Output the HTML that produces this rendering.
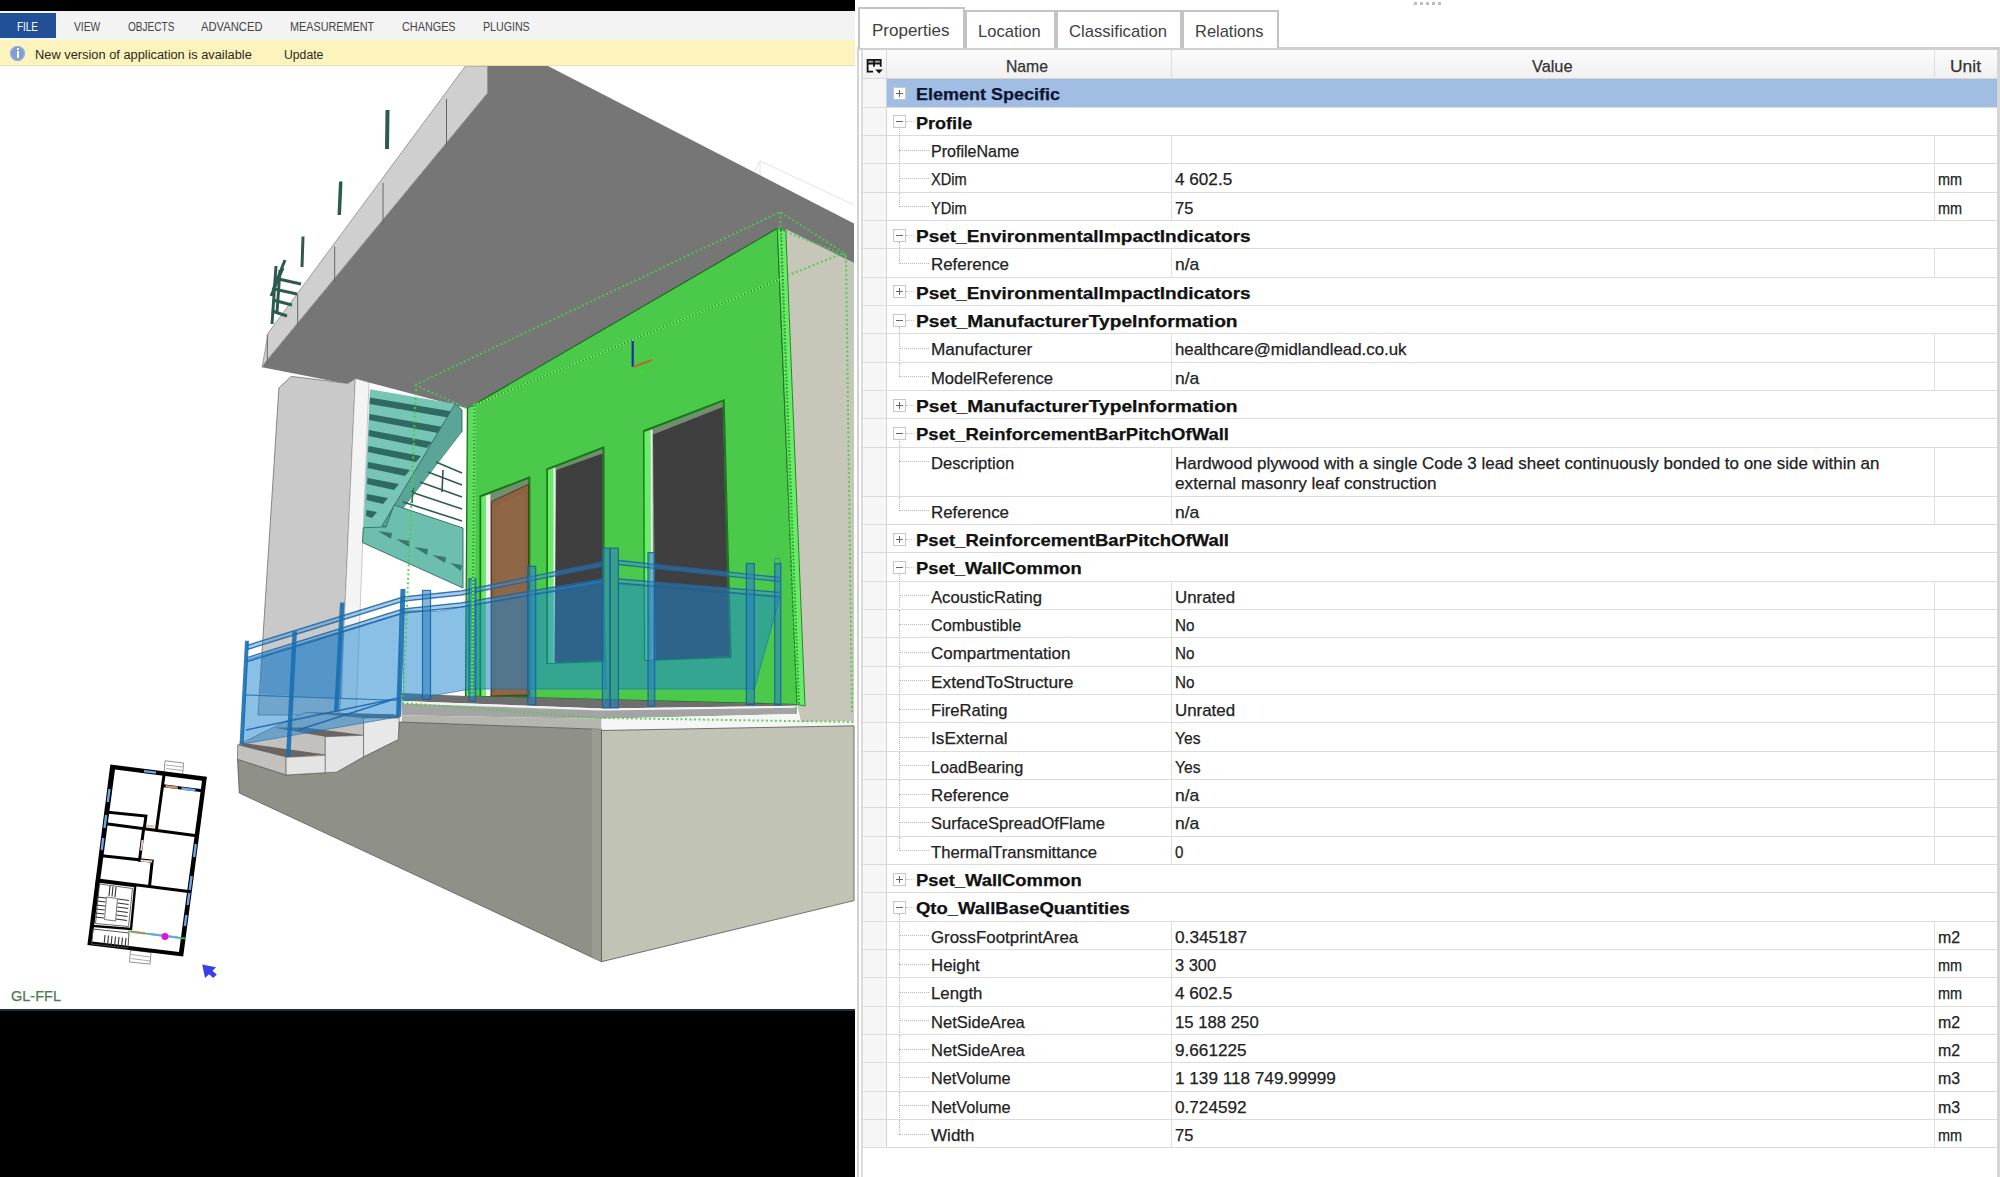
<!DOCTYPE html>
<html><head><meta charset="utf-8"><style>
html,body{margin:0;padding:0;}
body{width:2000px;height:1177px;overflow:hidden;position:relative;background:#fff;font-family:"Liberation Sans",sans-serif;}
.t{position:absolute;white-space:pre;line-height:1;transform-origin:0 0;-webkit-text-stroke:0.25px currentColor;}
.ns{-webkit-text-stroke:0;}
svg{position:absolute;left:0;top:0;}
</style></head><body>
<div style="position:absolute;left:0;top:0;width:855px;height:11px;background:#000"></div>
<div style="position:absolute;left:0;top:11px;width:855px;height:29px;background:#f3f3f3"></div>
<div style="position:absolute;left:0;top:13px;width:56px;height:25px;background:#214f98"></div>
<div style="position:absolute;left:0;top:40px;width:855px;height:26px;background:#fcf3bd;border-bottom:1px solid #e6dfb4;box-sizing:border-box"></div>
<div style="position:absolute;left:0;top:66px;width:855px;height:944px;background:#fff"></div>
<div style="position:absolute;left:0;top:1009px;width:855px;height:168px;background:#000;border-top:2px solid #1c2d48;box-sizing:border-box"></div>
<div style="position:absolute;left:10px;top:46px;width:15px;height:15px;border-radius:50%;background:#7d9fd6;box-shadow:inset 0 0 0 1px #9bb5e0"></div>
<div style="position:absolute;left:16.5px;top:48px;width:2px;height:2px;background:#fff"></div>
<div style="position:absolute;left:16.5px;top:51px;width:2px;height:7px;background:#fff"></div>
<span class="t ns" style="left:17.2px;top:21.44px;font-size:12px;font-weight:normal;color:#fff;transform:scaleX(0.8286);">FILE</span>
<span class="t ns" style="left:73.5px;top:21.44px;font-size:12px;font-weight:normal;color:#444;transform:scaleX(0.8542);">VIEW</span>
<span class="t ns" style="left:127.5px;top:21.44px;font-size:12px;font-weight:normal;color:#444;transform:scaleX(0.8402);">OBJECTS</span>
<span class="t ns" style="left:201.0px;top:21.44px;font-size:12px;font-weight:normal;color:#444;transform:scaleX(0.9347);">ADVANCED</span>
<span class="t ns" style="left:290.3px;top:21.44px;font-size:12px;font-weight:normal;color:#444;transform:scaleX(0.9010);">MEASUREMENT</span>
<span class="t ns" style="left:401.7px;top:21.44px;font-size:12px;font-weight:normal;color:#444;transform:scaleX(0.9032);">CHANGES</span>
<span class="t ns" style="left:482.8px;top:21.44px;font-size:12px;font-weight:normal;color:#444;transform:scaleX(0.8864);">PLUGINS</span>
<span class="t ns" style="left:35.2px;top:48.62px;font-size:12.5px;font-weight:normal;color:#2a2a1a;transform:scaleX(1.0263);">New version of application is available</span>
<span class="t ns" style="left:284.2px;top:48.62px;font-size:12.5px;font-weight:normal;color:#2a2a1a;transform:scaleX(0.9774);">Update</span>
<span class="t " style="left:10.7px;top:988.65px;font-size:14px;font-weight:normal;color:#4d7a52;transform:scaleX(1.0366);">GL-FFL</span>
<svg width="855" height="1009" viewBox="0 0 855 1009" style="position:absolute;left:0;top:0">
<defs>
<clipPath id="vp"><rect x="0" y="66" width="855" height="943"/></clipPath>
</defs>
<g clip-path="url(#vp)">
<!-- faint white box top right -->
<g stroke="#e2e2e2" stroke-width="1" fill="none">
<polyline points="753,175 760,161 854,205"/>
<line x1="760" y1="161" x2="760" y2="178"/>
</g>
<!-- dark slab underside -->
<polygon points="487.5,66 548,66 854,223.6 854,263 777.4,228.3 467.4,408.5 369,382.6 355.4,378.7 347.7,384 262.1,367.3 264.9,362.7 487.5,93" fill="#767676"/>
<!-- slab front strip -->
<polygon points="465.5,66 487.5,66 487.5,93 264.9,362.7 262.1,367.3 268.2,333" fill="#cfcfcf" stroke="#8a8a8a" stroke-width="0.8"/>
<line x1="446.5" y1="99" x2="446.5" y2="146.7" stroke="#666" stroke-width="1"/>
<line x1="383" y1="182.8" x2="383" y2="224.7" stroke="#666" stroke-width="1"/>
<line x1="334.7" y1="246.4" x2="334.7" y2="282.5" stroke="#666" stroke-width="1"/>
<line x1="297.7" y1="294" x2="297.7" y2="325.8" stroke="#666" stroke-width="1"/>
<line x1="267.3" y1="334.5" x2="267.3" y2="363.4" stroke="#666" stroke-width="1"/>
<!-- posts above slab -->
<polygon points="385.5,110 389.5,110 389,149 385,149" fill="#2d5a50"/>
<polygon points="339,181.5 342.5,181.5 341,215 337.5,215" fill="#2d5a50"/>
<polygon points="301.5,236.5 304.5,236.5 303.5,267 300.5,267" fill="#2d5a50"/>
<!-- railing cluster left -->
<g stroke="#2d5a50" stroke-width="3" fill="none">
<line x1="285" y1="260" x2="273" y2="290"/>
<line x1="283" y1="268" x2="271" y2="296"/>
<line x1="274" y1="278" x2="301" y2="284"/>
<line x1="274" y1="289" x2="297" y2="294"/>
<line x1="273" y1="300" x2="292" y2="305"/>
<line x1="272" y1="311" x2="287" y2="316"/>
<line x1="276" y1="266" x2="272" y2="324"/>
<line x1="280" y1="270" x2="277" y2="312"/>
</g>
<!-- column -->
<polygon points="291.2,376.4 347.7,383.3 355.4,378.7 340,715 258,715 278.9,387.9" fill="#c9c9c9" stroke="#6f6f6f" stroke-width="0.8"/>
<polygon points="355.4,378.7 369,382.6 356,715 340,715" fill="#f4f4f4" stroke="#9a9a9a" stroke-width="0.5"/>
<!-- stairs upper flight -->
<polygon points="370,389.3 456,404 462,410 462,432 386,527 363.4,527.7" fill="#76c5b5"/>
<g fill="#2f6a62">
<polygon points="370,397.5 455,412 451,418 369.5,404"/>
<polygon points="369.5,414 443,427 438,433 369,420"/>
<polygon points="369,430 432,442 427,448 368.5,436"/>
<polygon points="368.5,446 421,456 416,462 368,452"/>
<polygon points="368,462 410,470 405,476 367.5,468"/>
<polygon points="367.5,478 399,484 394,490 367,484"/>
<polygon points="367,494 388,498 383,504 366.5,500"/>
<polygon points="366.5,510 377,512 372,518 366,516"/>
</g>
<polygon points="455,404 462,410 462,432 389,527 382,526" fill="#5aa597" stroke="#2f6a62" stroke-width="0.9"/>
<!-- white area behind stair railing -->
<polygon points="462,432 463,528 394,505 389,527" fill="#ffffff"/>
<g stroke="#2f5a55" stroke-width="1.6">
<line x1="436" y1="462" x2="462" y2="473"/>
<line x1="428" y1="472" x2="462" y2="485"/>
<line x1="420" y1="482" x2="462" y2="497"/>
<line x1="411" y1="492" x2="462" y2="509"/>
<line x1="403" y1="502" x2="462" y2="521"/>
<line x1="443" y1="470" x2="442" y2="492"/>
<line x1="413" y1="488" x2="412" y2="503"/>
</g>
<!-- lower flight plate -->
<polygon points="394,505 463,528 463,588 362.5,542.6 363.4,527.7 386,527" fill="#6cbfae" stroke="#2f6a62" stroke-width="0.9"/>
<g fill="#3a786e">
<polygon points="378,531 392,533 391,539"/>
<polygon points="396,539 410,541 409,547"/>
<polygon points="414,547 428,549 427,555"/>
<polygon points="432,555 446,557 445,563"/>
<polygon points="450,563 462,565 461,571"/>
</g>
<!-- right beige side face -->
<polygon points="785.8,229 854,263 854,721 801,722 797,704.5" fill="#c6c7b9"/>
<!-- green wall -->
<polygon points="467.4,408.5 777.4,228.3 797,704.5 465.5,696" fill="#4bc94b" stroke="#1a6a1a" stroke-width="1.2"/>
<polygon points="777.4,228.3 785.8,231 805,706 797,704.5" fill="#67ec67" stroke="#1a6a1a" stroke-width="0.8"/>
<polygon points="468.5,408 476,404 475,696 467,696" fill="#5fdc5f"/>
<!-- door -->
<polygon points="480.5,496.3 529.3,477.5 529.3,696 480.5,696" fill="#6f8f6f" stroke="#167a16" stroke-width="2"/>
<polygon points="481.3,497 485.8,495.5 485.8,696 481.3,696" fill="#66ee66"/>
<polygon points="485.8,495.5 490.3,494 490.3,696 485.8,696" fill="#f2f2f2"/>
<polygon points="491.5,501.5 528.5,484.3 528.5,695 491.5,696" fill="#8b6242" stroke="#5a3a20" stroke-width="1"/>
<polygon points="495.5,507 525,492 525,693 495.5,694" fill="#8f6646"/>
<!-- window 1 -->
<polygon points="547.3,469.3 603.5,447.5 603.5,661 547.3,663" fill="#6f8f6f" stroke="#167a16" stroke-width="2"/>
<polygon points="548,470 553.3,468 553.3,663 548,663" fill="#66ee66"/>
<polygon points="553.3,468 555.5,467.5 555.5,662 553.3,663" fill="#f0f0f0"/>
<polygon points="556.3,470 602.5,453.5 602.5,660 554.5,662" fill="#3f3f3f"/>
<!-- window 2 -->
<polygon points="643.9,431 723.7,400.4 730.5,657 645,660" fill="#6f8f6f" stroke="#167a16" stroke-width="2"/>
<polygon points="644.5,432 650.5,430 651,660 645,660" fill="#66ee66"/>
<polygon points="650.5,430 652.5,429.5 653,660 651,660" fill="#f0f0f0"/>
<polygon points="653,434.5 722.7,407 729.5,656 655.8,660" fill="#3f3f3f"/>
<!-- floor strip -->
<polygon points="401.7,693 465.5,696 797,704.5 797,705.8 601.5,708.5 401.7,701" fill="#6e6e6e"/>
<polygon points="401.7,701 601.5,708.5 797,705.8 797,707.7 601.5,710.5 401.7,703.5" fill="#f2f2f2"/>
<polygon points="401.7,703.5 601.5,710.5 797,707.7 797,714 601.5,718.8 401.7,715.3" fill="#a4a4a4"/>
<polygon points="401.7,715.3 601.5,718.8 601.5,729.4 401.7,722" fill="#b4b6ad"/>
<polygon points="601.5,718.8 797,714 801,722 854,721 854,725.8 601.5,730.5" fill="#f6f6f6"/>
<!-- base -->
<polygon points="237.5,759.2 286.1,775 325.3,772.7 336.5,772.2 363.6,756.8 398.2,739.5 399.2,722 601.5,729.4 601.5,961.7 239.3,793" fill="#8f9188" stroke="#555" stroke-width="0.8"/>
<polygon points="592,729 601.5,729.4 601.5,961.7 592,957" fill="#9a9c93"/>
<polygon points="601.5,730.5 854,725.8 854,900.6 601.5,961.7" fill="#c1c3b5" stroke="#555" stroke-width="0.8"/>
<!-- steps -->
<polygon points="237.5,745.1 273,727.4 304.8,712.4 399.2,715.2 399.2,718 363.6,718 363.6,735.3 325.3,736.7 325.3,754.5 286.1,757.3 286.1,775 237.5,759.2" fill="#c3c1be" stroke="#555" stroke-width="0.6"/>
<polygon points="237.5,745.1 245,743.3 325.3,754.5 286.1,757.3" fill="#6a6462"/>
<polygon points="273,727.4 304.8,727.4 363.6,734.9 325.3,736.7" fill="#6a6462"/>
<polygon points="304.8,712.4 393.6,714.3 399.2,718 363.6,718" fill="#6a6462"/>
<polygon points="286.1,757.3 325.3,755.4 325.3,772.7 286.1,775" fill="#e4e4e4" stroke="#555" stroke-width="0.6"/>
<polygon points="325.3,736.7 363.6,735.3 363.6,756.8 336.5,772.2 325.3,772.7" fill="#e4e4e4" stroke="#555" stroke-width="0.6"/>
<polygon points="363.6,718 399.2,718 398.2,739.5 363.6,756.8" fill="#e8e8e8" stroke="#555" stroke-width="0.6"/>
<!-- glass panels (translucent) -->
<g fill="#1f84d0" fill-opacity="0.52" stroke="#1c6aa8" stroke-width="1" stroke-opacity="0.6">
<polygon points="247,659.7 400,613.5 400,700.5 245,695"/>
<polygon points="245,695 400,700.5 398.6,716.8 243,744"/>
<polygon points="403.3,610.8 440,611 603,580.5 606.5,689 470.6,689 403,701"/>
<polygon points="618.4,583.9 779.8,597.5 754.3,689 618.4,689"/>
</g>
<polygon points="262,655 344,630 342,698 260,694" fill="#1a70c0" fill-opacity="0.3"/>
<!-- rails (double bands) -->
<g stroke="#1a66aa" stroke-width="1.4" fill="none" stroke-opacity="0.9">
<polyline points="247,645.5 403.3,597 461,591 603,562"/>
<polyline points="247,649.5 403.3,601 461,595 603,566"/>
<polyline points="247,657.7 403.3,609 461,603 603,579"/>
<polyline points="247,661.7 403.3,613 461,607 603,583"/>
<polyline points="618.4,560.5 779.8,577.5"/>
<polyline points="618.4,564.5 779.8,581.5"/>
<polyline points="618.4,579 779.8,592.5"/>
<polyline points="618.4,583 779.8,596.5"/>
<polyline points="246,730 400,697.8"/>
<polyline points="298,730 390,700.5"/>
</g>
<g stroke="#3a8ccc" stroke-width="2.6" fill="none" stroke-opacity="0.45">
<polyline points="247,647.5 403.3,599 461,593 603,564"/>
<polyline points="247,659.7 403.3,611 461,605 603,581"/>
<polyline points="618.4,562.5 779.8,579.5"/>
<polyline points="618.4,581 779.8,594.5"/>
</g>
<!-- posts -->
<g fill="#1a6eb0" fill-opacity="0.9">
<polygon points="245,640.7 249,640.7 243.6,744 239.6,744"/>
<polygon points="292.5,631.2 297,631.2 290.5,756 286,756"/>
<polygon points="340,602.6 344.5,602.6 338.5,711.4 334,711.4"/>
<polygon points="400.5,589 405.5,589 401,716.8 396,716.8"/>
</g>
<g fill="#2a7ec0" fill-opacity="0.55" stroke="#15609a" stroke-width="1.2" stroke-opacity="0.85">
<rect x="422.5" y="590.4" width="8" height="109"/>
<rect x="469" y="578.8" width="6.7" height="122.2"/>
<rect x="527.7" y="566.3" width="8" height="138.2"/>
<rect x="602.4" y="548.2" width="7.5" height="159.7"/>
<rect x="610.4" y="548.2" width="8" height="159.7"/>
<rect x="648" y="552.6" width="6.7" height="153.6"/>
<rect x="746.4" y="563.5" width="7.9" height="141"/>
<rect x="774.7" y="563.5" width="6.1" height="141"/>
</g>
<circle cx="777.4" cy="561" r="3" fill="none" stroke="#2a7a8a" stroke-width="1" opacity="0.6"/>
<!-- dotted bounding box lines -->
<g stroke="#4ccc4c" stroke-width="2" stroke-dasharray="2,2.5" fill="none" opacity="0.9">
<polyline points="415,385 780,212 846,254"/>
<polyline points="415,385 467.4,408.5"/>
<polyline points="416,389 403,702"/>
<polyline points="777.4,228.3 846,256"/>
<polyline points="780,212 796,712"/>
<polyline points="846,256 852,712"/>
<polyline points="402,703 601,718 854,722"/>
<polyline points="787.5,275.6 838.3,255.2 846,254"/>
</g>
<g fill="none" stroke-width="2">
<polyline points="472,406 779.7,279.4" stroke="#6ae86a"/>
<polyline points="472,406 779.7,279.4" stroke="#2a9a2a" stroke-dasharray="1.5,2"/>
<polyline points="474.5,405 472,696" stroke="#6ae86a"/>
<polyline points="474.5,405 472,696" stroke="#2a9a2a" stroke-dasharray="1.5,2"/>
<polyline points="781,230 799,704" stroke="#2a9a2a" stroke-dasharray="1.5,2"/>
</g>
<!-- axis -->
<line x1="632.7" y1="341" x2="632.7" y2="367" stroke="#1030a8" stroke-width="2.2"/>
<line x1="633" y1="367" x2="652" y2="360" stroke="#b86a2a" stroke-width="2"/>
<circle cx="642" cy="371.5" r="2.5" fill="#3cd83c"/>
</g>
<!-- floor plan minimap -->
<g>
<polygon points="165,760.8 183.6,763 182.5,775 164,773" fill="#fff" stroke="#777" stroke-width="0.8"/>
<line x1="166" y1="765" x2="182.5" y2="767" stroke="#888" stroke-width="0.7"/>
<line x1="166" y1="768.5" x2="182.5" y2="770.5" stroke="#888" stroke-width="0.7"/>
<polygon points="130.5,950 151,952.5 150.1,964.1 129.5,962" fill="#fff" stroke="#777" stroke-width="0.8"/>
<line x1="131" y1="954.5" x2="150" y2="957" stroke="#888" stroke-width="0.7"/>
<line x1="131" y1="958.5" x2="150" y2="961" stroke="#888" stroke-width="0.7"/>
<polygon points="110.3,764.6 206.9,776.8 183.2,956.5 87.4,945" fill="#000"/>
<polygon points="115,769.6 202,780.8 179,952 92,941.5" fill="#fff"/>
<g stroke="#000" stroke-width="3" stroke-linecap="square" fill="none">
<line x1="164" y1="775" x2="156.5" y2="829.4"/>
<polyline points="110,812.4 145.9,816.1 144.3,828.3"/>
<line x1="108" y1="824" x2="197" y2="835.9"/>
<line x1="143.7" y1="828.3" x2="139.5" y2="860.2"/>
<polyline points="104,855.9 152.2,861.2 149.6,885.5"/>
<line x1="99.7" y1="880.2" x2="189" y2="891.5"/>
<line x1="165" y1="786" x2="201" y2="790.5"/>
</g>
<polygon points="97,881.2 135.2,886 131,929 92.7,925.9" fill="none" stroke="#000" stroke-width="2.4"/>
<polygon points="99.5,884 132.5,888.5 128.5,926.5 95.5,923.5" fill="none" stroke="#444" stroke-width="0.8"/>
<g stroke="#333" stroke-width="1.1">
<line x1="97" y1="897" x2="106" y2="898"/><line x1="96.6" y1="901" x2="105.6" y2="902"/><line x1="96.2" y1="905" x2="105.2" y2="906"/>
<line x1="95.8" y1="909" x2="104.8" y2="910"/><line x1="95.4" y1="913" x2="104.4" y2="914"/><line x1="95" y1="917" x2="104" y2="918"/>
<line x1="118" y1="899" x2="129" y2="900.5"/><line x1="117.6" y1="903" x2="128.6" y2="904.5"/><line x1="117.2" y1="907" x2="128.2" y2="908.5"/>
<line x1="116.8" y1="911" x2="127.8" y2="912.5"/><line x1="116.4" y1="915" x2="127.4" y2="916.5"/><line x1="116" y1="919" x2="127" y2="920.5"/>
<line x1="110" y1="886" x2="109" y2="896"/><line x1="113" y1="886.5" x2="112" y2="896.5"/><line x1="116" y1="887" x2="115" y2="897"/>
<line x1="105" y1="935" x2="104" y2="945"/><line x1="108.5" y1="935.5" x2="107.5" y2="945.5"/><line x1="112" y1="936" x2="111" y2="946"/>
<line x1="115.5" y1="936.5" x2="114.5" y2="946.5"/><line x1="119" y1="937" x2="118" y2="947"/><line x1="122.5" y1="937.5" x2="121.5" y2="947.5"/><line x1="126" y1="938" x2="125" y2="948"/>
</g>
<polygon points="106.5,897 117.5,898.5 115.5,921 104.5,919.5" fill="none" stroke="#555" stroke-width="0.8"/>
<polygon points="93,929 129,933 128,948 91.5,944" fill="none" stroke="#444" stroke-width="0.9"/>
<line x1="127.8" y1="931.2" x2="186.2" y2="938.6" stroke="#30c050" stroke-width="1.6"/>
<line x1="149" y1="933.9" x2="178" y2="937.6" stroke="#6aa8e8" stroke-width="2.2"/>
<line x1="131" y1="931.6" x2="145" y2="933.4" stroke="#b09070" stroke-width="2.2"/>
<circle cx="165" cy="936.5" r="3.4" fill="#e010e0"/>
<g stroke="#6aa8e8" stroke-width="2.4">
<line x1="144" y1="771.1" x2="156" y2="772.6"/>
<line x1="109.5" y1="789" x2="107.8" y2="802"/>
<line x1="106.2" y1="815" x2="104.5" y2="828"/>
<line x1="103.2" y1="838" x2="101.7" y2="850"/>
<line x1="195.8" y1="844" x2="194.1" y2="857"/>
<line x1="191.6" y1="876" x2="189.7" y2="890"/>
<line x1="189.3" y1="893" x2="187.7" y2="905"/>
<line x1="186.4" y1="915" x2="184.9" y2="926"/>
<line x1="181.4" y1="788.5" x2="195.3" y2="790.2"/>
</g>
<line x1="165.5" y1="786.2" x2="177.7" y2="787.7" stroke="#c09878" stroke-width="2.6"/>
<line x1="146" y1="825.6" x2="154.4" y2="826.7" stroke="#e0c0b0" stroke-width="2.2"/>
<line x1="142.5" y1="840" x2="141.2" y2="850.6" stroke="#f0d0c0" stroke-width="2"/>
<line x1="140.5" y1="860.4" x2="152.2" y2="861.4" stroke="#f0d0c0" stroke-width="2"/>
</g>
<polygon points="202.2,964.5 216,967.3 212.5,970.8 216.8,974.6 213.2,978 209,974.2 205,978" fill="#3a40e8"/>
</svg>

<div style="position:absolute;left:857px;top:50px;width:2px;height:1127px;background:#d2d2d2"></div>
<div style="position:absolute;left:861px;top:50px;width:2px;height:1127px;background:#dcdcdc"></div>
<div style="position:absolute;left:1997px;top:50px;width:3px;height:1127px;background:#d6d6d6"></div>
<div style="position:absolute;left:857px;top:47px;width:1143px;height:3px;background:#cfcfcf"></div>
<div style="position:absolute;left:858px;top:6.5px;width:107px;height:41.5px;border:2px solid #c4c4c4;border-bottom:none;box-sizing:border-box;background:#fff"></div>
<div style="position:absolute;left:965px;top:10px;width:91px;height:38px;border:2px solid #c4c4c4;border-bottom:none;box-sizing:border-box;background:#fff"></div>
<div style="position:absolute;left:1056px;top:10px;width:126px;height:38px;border:2px solid #c4c4c4;border-bottom:none;box-sizing:border-box;background:#fff"></div>
<div style="position:absolute;left:1182px;top:10px;width:97px;height:38px;border:2px solid #c4c4c4;border-bottom:none;box-sizing:border-box;background:#fff"></div>
<span class="t ns" style="left:872.0px;top:22.11px;font-size:17px;font-weight:normal;color:#404040;transform:scaleX(1.0002);">Properties</span>
<span class="t ns" style="left:978.0px;top:23.11px;font-size:17px;font-weight:normal;color:#404040;transform:scaleX(0.9738);">Location</span>
<span class="t ns" style="left:1069.0px;top:23.11px;font-size:17px;font-weight:normal;color:#404040;transform:scaleX(0.9785);">Classification</span>
<span class="t ns" style="left:1195.4px;top:23.11px;font-size:17px;font-weight:normal;color:#404040;transform:scaleX(0.9679);">Relations</span>
<div style="position:absolute;left:1414px;top:2px;width:3px;height:3px;background:#bdbdbd"></div>
<div style="position:absolute;left:1420px;top:2px;width:3px;height:3px;background:#bdbdbd"></div>
<div style="position:absolute;left:1426px;top:2px;width:3px;height:3px;background:#bdbdbd"></div>
<div style="position:absolute;left:1432px;top:2px;width:3px;height:3px;background:#bdbdbd"></div>
<div style="position:absolute;left:1438px;top:2px;width:3px;height:3px;background:#bdbdbd"></div>
<div style="position:absolute;left:863px;top:50px;width:1134px;height:29px;background:linear-gradient(#fcfcfc,#f0f0f0)"></div>
<div style="position:absolute;left:886px;top:50px;width:1px;height:29px;background:#d8d8d8"></div>
<div style="position:absolute;left:1171px;top:50px;width:1px;height:29px;background:#dcdcdc"></div>
<div style="position:absolute;left:1934px;top:50px;width:1px;height:29px;background:#dcdcdc"></div>
<div style="position:absolute;left:863px;top:78px;width:1134px;height:1px;background:#d8d8d8"></div>
<svg width="30" height="30" style="position:absolute;left:860px;top:52px" viewBox="860 52 30 30"><rect x="868.5" y="60.8" width="11.5" height="2.2" fill="#9a9a9a"/><path d="M873 71.6 H867.6 V59.9 H880.7 V66.8 M867.6 63.7 H880.7 M874 59.9 V66.8" fill="none" stroke="#111" stroke-width="1.8"/><polygon points="875.3,69.4 882.8,69.4 879,73.6" fill="#111"/></svg>
<span class="t " style="left:1006.2px;top:58.01px;font-size:17px;font-weight:normal;color:#333;transform:scaleX(0.9259);">Name</span>
<span class="t " style="left:1531.8px;top:58.01px;font-size:17px;font-weight:normal;color:#333;transform:scaleX(0.9593);">Value</span>
<span class="t " style="left:1949.6px;top:58.01px;font-size:17px;font-weight:normal;color:#333;transform:scaleX(1.0253);">Unit</span>
<div style="position:absolute;left:863px;top:79.40px;width:23px;height:28.33px;background:#f6f6f6"></div>
<div style="position:absolute;left:887px;top:79.40px;width:1110px;height:28.33px;background:#a0bde3;box-shadow:inset 0 1px 0 #a9b9cf, inset 0 -1px 0 #a9b9cf"></div>
<div style="position:absolute;left:892.5px;top:87.06px;width:13px;height:13px;box-sizing:border-box;border:1px solid #c8c8c8;background:#fff"></div>
<div style="position:absolute;left:895.5px;top:93.06px;width:7px;height:1px;background:#666"></div>
<div style="position:absolute;left:898.5px;top:90.06px;width:1px;height:7px;background:#666"></div>
<div style="position:absolute;left:906px;top:93.06px;width:8px;height:0;border-top:1px dotted #c0c0c0"></div>
<span class="t " style="left:916.4px;top:86.37px;font-size:17px;font-weight:bold;color:#0c1433;transform:scaleX(1.0583);">Element Specific</span>
<div style="position:absolute;left:863px;top:106.73px;width:1134px;height:1px;background:#dcdcdc"></div>
<div style="position:absolute;left:863px;top:107.73px;width:23px;height:28.33px;background:#f6f6f6"></div>
<div style="position:absolute;left:892.5px;top:115.40px;width:13px;height:13px;box-sizing:border-box;border:1px solid #c8c8c8;background:#fff"></div>
<div style="position:absolute;left:895.5px;top:121.40px;width:7px;height:1px;background:#666"></div>
<div style="position:absolute;left:906px;top:121.40px;width:8px;height:0;border-top:1px dotted #c0c0c0"></div>
<span class="t " style="left:916.4px;top:114.70px;font-size:17px;font-weight:bold;color:#111;transform:scaleX(1.0623);">Profile</span>
<div style="position:absolute;left:863px;top:135.06px;width:1134px;height:1px;background:#dcdcdc"></div>
<div style="position:absolute;left:863px;top:136.06px;width:23px;height:28.33px;background:#f6f6f6"></div>
<div style="position:absolute;left:1171px;top:136.06px;width:1px;height:28.33px;background:#e0e0e0"></div>
<div style="position:absolute;left:1934px;top:136.06px;width:1px;height:28.33px;background:#e0e0e0"></div>
<div style="position:absolute;left:899px;top:149.72px;width:30px;height:0;border-top:1px dotted #b8b8b8"></div>
<div style="position:absolute;left:899px;top:128.90px;width:0;height:35.49px;border-left:1px dotted #b8b8b8"></div>
<span class="t " style="left:930.8px;top:143.03px;font-size:17px;font-weight:normal;color:#222;transform:scaleX(0.9439);">ProfileName</span>
<div style="position:absolute;left:863px;top:163.39px;width:1134px;height:1px;background:#dcdcdc"></div>
<div style="position:absolute;left:863px;top:164.39px;width:23px;height:28.33px;background:#f6f6f6"></div>
<div style="position:absolute;left:1171px;top:164.39px;width:1px;height:28.33px;background:#e0e0e0"></div>
<div style="position:absolute;left:1934px;top:164.39px;width:1px;height:28.33px;background:#e0e0e0"></div>
<div style="position:absolute;left:899px;top:178.05px;width:30px;height:0;border-top:1px dotted #b8b8b8"></div>
<div style="position:absolute;left:899px;top:164.39px;width:0;height:28.33px;border-left:1px dotted #b8b8b8"></div>
<span class="t " style="left:930.8px;top:171.36px;font-size:17px;font-weight:normal;color:#222;transform:scaleX(0.8614);">XDim</span>
<span class="t " style="left:1175.1px;top:171.36px;font-size:17px;font-weight:normal;color:#222;transform:scaleX(1.0082);">4 602.5</span>
<span class="t " style="left:1938.2px;top:171.36px;font-size:17px;font-weight:normal;color:#222;transform:scaleX(0.8507);">mm</span>
<div style="position:absolute;left:863px;top:191.72px;width:1134px;height:1px;background:#dcdcdc"></div>
<div style="position:absolute;left:863px;top:192.72px;width:23px;height:28.33px;background:#f6f6f6"></div>
<div style="position:absolute;left:1171px;top:192.72px;width:1px;height:28.33px;background:#e0e0e0"></div>
<div style="position:absolute;left:1934px;top:192.72px;width:1px;height:28.33px;background:#e0e0e0"></div>
<div style="position:absolute;left:899px;top:206.38px;width:30px;height:0;border-top:1px dotted #b8b8b8"></div>
<div style="position:absolute;left:899px;top:192.72px;width:0;height:14.16px;border-left:1px dotted #b8b8b8"></div>
<span class="t " style="left:930.8px;top:199.69px;font-size:17px;font-weight:normal;color:#222;transform:scaleX(0.8614);">YDim</span>
<span class="t " style="left:1175.1px;top:199.69px;font-size:17px;font-weight:normal;color:#222;transform:scaleX(0.9671);">75</span>
<span class="t " style="left:1938.2px;top:199.69px;font-size:17px;font-weight:normal;color:#222;transform:scaleX(0.8507);">mm</span>
<div style="position:absolute;left:863px;top:220.05px;width:1134px;height:1px;background:#dcdcdc"></div>
<div style="position:absolute;left:863px;top:221.05px;width:23px;height:28.33px;background:#f6f6f6"></div>
<div style="position:absolute;left:892.5px;top:228.71px;width:13px;height:13px;box-sizing:border-box;border:1px solid #c8c8c8;background:#fff"></div>
<div style="position:absolute;left:895.5px;top:234.71px;width:7px;height:1px;background:#666"></div>
<div style="position:absolute;left:906px;top:234.71px;width:8px;height:0;border-top:1px dotted #c0c0c0"></div>
<span class="t " style="left:916.4px;top:228.02px;font-size:17px;font-weight:bold;color:#111;transform:scaleX(1.1173);">Pset_EnvironmentalImpactIndicators</span>
<div style="position:absolute;left:863px;top:248.38px;width:1134px;height:1px;background:#dcdcdc"></div>
<div style="position:absolute;left:863px;top:249.38px;width:23px;height:28.33px;background:#f6f6f6"></div>
<div style="position:absolute;left:1171px;top:249.38px;width:1px;height:28.33px;background:#e0e0e0"></div>
<div style="position:absolute;left:1934px;top:249.38px;width:1px;height:28.33px;background:#e0e0e0"></div>
<div style="position:absolute;left:899px;top:263.04px;width:30px;height:0;border-top:1px dotted #b8b8b8"></div>
<div style="position:absolute;left:899px;top:242.21px;width:0;height:21.33px;border-left:1px dotted #b8b8b8"></div>
<span class="t " style="left:930.8px;top:256.35px;font-size:17px;font-weight:normal;color:#222;transform:scaleX(0.9944);">Reference</span>
<span class="t " style="left:1175.1px;top:256.35px;font-size:17px;font-weight:normal;color:#222;transform:scaleX(1.0279);">n/a</span>
<div style="position:absolute;left:863px;top:276.71px;width:1134px;height:1px;background:#dcdcdc"></div>
<div style="position:absolute;left:863px;top:277.71px;width:23px;height:28.33px;background:#f6f6f6"></div>
<div style="position:absolute;left:892.5px;top:285.37px;width:13px;height:13px;box-sizing:border-box;border:1px solid #c8c8c8;background:#fff"></div>
<div style="position:absolute;left:895.5px;top:291.37px;width:7px;height:1px;background:#666"></div>
<div style="position:absolute;left:898.5px;top:288.37px;width:1px;height:7px;background:#666"></div>
<div style="position:absolute;left:906px;top:291.37px;width:8px;height:0;border-top:1px dotted #c0c0c0"></div>
<span class="t " style="left:916.4px;top:284.68px;font-size:17px;font-weight:bold;color:#111;transform:scaleX(1.1173);">Pset_EnvironmentalImpactIndicators</span>
<div style="position:absolute;left:863px;top:305.04px;width:1134px;height:1px;background:#dcdcdc"></div>
<div style="position:absolute;left:863px;top:306.04px;width:23px;height:28.33px;background:#f6f6f6"></div>
<div style="position:absolute;left:892.5px;top:313.70px;width:13px;height:13px;box-sizing:border-box;border:1px solid #c8c8c8;background:#fff"></div>
<div style="position:absolute;left:895.5px;top:319.70px;width:7px;height:1px;background:#666"></div>
<div style="position:absolute;left:906px;top:319.70px;width:8px;height:0;border-top:1px dotted #c0c0c0"></div>
<span class="t " style="left:916.4px;top:313.01px;font-size:17px;font-weight:bold;color:#111;transform:scaleX(1.1285);">Pset_ManufacturerTypeInformation</span>
<div style="position:absolute;left:863px;top:333.37px;width:1134px;height:1px;background:#dcdcdc"></div>
<div style="position:absolute;left:863px;top:334.37px;width:23px;height:28.33px;background:#f6f6f6"></div>
<div style="position:absolute;left:1171px;top:334.37px;width:1px;height:28.33px;background:#e0e0e0"></div>
<div style="position:absolute;left:1934px;top:334.37px;width:1px;height:28.33px;background:#e0e0e0"></div>
<div style="position:absolute;left:899px;top:348.03px;width:30px;height:0;border-top:1px dotted #b8b8b8"></div>
<div style="position:absolute;left:899px;top:327.20px;width:0;height:35.50px;border-left:1px dotted #b8b8b8"></div>
<span class="t " style="left:930.8px;top:341.34px;font-size:17px;font-weight:normal;color:#222;transform:scaleX(1.0103);">Manufacturer</span>
<span class="t " style="left:1175.1px;top:341.34px;font-size:17px;font-weight:normal;color:#222;transform:scaleX(0.9906);">healthcare@midlandlead.co.uk</span>
<div style="position:absolute;left:863px;top:361.70px;width:1134px;height:1px;background:#dcdcdc"></div>
<div style="position:absolute;left:863px;top:362.70px;width:23px;height:28.33px;background:#f6f6f6"></div>
<div style="position:absolute;left:1171px;top:362.70px;width:1px;height:28.33px;background:#e0e0e0"></div>
<div style="position:absolute;left:1934px;top:362.70px;width:1px;height:28.33px;background:#e0e0e0"></div>
<div style="position:absolute;left:899px;top:376.36px;width:30px;height:0;border-top:1px dotted #b8b8b8"></div>
<div style="position:absolute;left:899px;top:362.70px;width:0;height:14.17px;border-left:1px dotted #b8b8b8"></div>
<span class="t " style="left:930.8px;top:369.67px;font-size:17px;font-weight:normal;color:#222;transform:scaleX(0.9788);">ModelReference</span>
<span class="t " style="left:1175.1px;top:369.67px;font-size:17px;font-weight:normal;color:#222;transform:scaleX(1.0279);">n/a</span>
<div style="position:absolute;left:863px;top:390.03px;width:1134px;height:1px;background:#dcdcdc"></div>
<div style="position:absolute;left:863px;top:391.03px;width:23px;height:28.33px;background:#f6f6f6"></div>
<div style="position:absolute;left:892.5px;top:398.69px;width:13px;height:13px;box-sizing:border-box;border:1px solid #c8c8c8;background:#fff"></div>
<div style="position:absolute;left:895.5px;top:404.69px;width:7px;height:1px;background:#666"></div>
<div style="position:absolute;left:898.5px;top:401.69px;width:1px;height:7px;background:#666"></div>
<div style="position:absolute;left:906px;top:404.69px;width:8px;height:0;border-top:1px dotted #c0c0c0"></div>
<span class="t " style="left:916.4px;top:398.00px;font-size:17px;font-weight:bold;color:#111;transform:scaleX(1.1285);">Pset_ManufacturerTypeInformation</span>
<div style="position:absolute;left:863px;top:418.36px;width:1134px;height:1px;background:#dcdcdc"></div>
<div style="position:absolute;left:863px;top:419.36px;width:23px;height:28.33px;background:#f6f6f6"></div>
<div style="position:absolute;left:892.5px;top:427.02px;width:13px;height:13px;box-sizing:border-box;border:1px solid #c8c8c8;background:#fff"></div>
<div style="position:absolute;left:895.5px;top:433.02px;width:7px;height:1px;background:#666"></div>
<div style="position:absolute;left:906px;top:433.02px;width:8px;height:0;border-top:1px dotted #c0c0c0"></div>
<span class="t " style="left:916.4px;top:426.33px;font-size:17px;font-weight:bold;color:#111;transform:scaleX(1.0887);">Pset_ReinforcementBarPitchOfWall</span>
<div style="position:absolute;left:863px;top:446.69px;width:1134px;height:1px;background:#dcdcdc"></div>
<div style="position:absolute;left:863px;top:447.69px;width:23px;height:49.00px;background:#f6f6f6"></div>
<div style="position:absolute;left:1171px;top:447.69px;width:1px;height:49.00px;background:#e0e0e0"></div>
<div style="position:absolute;left:1934px;top:447.69px;width:1px;height:49.00px;background:#e0e0e0"></div>
<div style="position:absolute;left:899px;top:461.35px;width:30px;height:0;border-top:1px dotted #b8b8b8"></div>
<div style="position:absolute;left:899px;top:440.52px;width:0;height:56.17px;border-left:1px dotted #b8b8b8"></div>
<span class="t " style="left:930.8px;top:454.66px;font-size:17px;font-weight:normal;color:#222;transform:scaleX(0.9783);">Description</span>
<span class="t " style="left:1175.1px;top:454.66px;font-size:17px;font-weight:normal;color:#222;transform:scaleX(0.9979);">Hardwood plywood with a single Code 3 lead sheet continuously bonded to one side within an</span>
<span class="t " style="left:1175.1px;top:475.16px;font-size:17px;font-weight:normal;color:#222;transform:scaleX(1.0104);">external masonry leaf construction</span>
<div style="position:absolute;left:863px;top:495.69px;width:1134px;height:1px;background:#dcdcdc"></div>
<div style="position:absolute;left:863px;top:496.69px;width:23px;height:28.33px;background:#f6f6f6"></div>
<div style="position:absolute;left:1171px;top:496.69px;width:1px;height:28.33px;background:#e0e0e0"></div>
<div style="position:absolute;left:1934px;top:496.69px;width:1px;height:28.33px;background:#e0e0e0"></div>
<div style="position:absolute;left:899px;top:510.35px;width:30px;height:0;border-top:1px dotted #b8b8b8"></div>
<div style="position:absolute;left:899px;top:496.69px;width:0;height:14.17px;border-left:1px dotted #b8b8b8"></div>
<span class="t " style="left:930.8px;top:503.66px;font-size:17px;font-weight:normal;color:#222;transform:scaleX(0.9944);">Reference</span>
<span class="t " style="left:1175.1px;top:503.66px;font-size:17px;font-weight:normal;color:#222;transform:scaleX(1.0279);">n/a</span>
<div style="position:absolute;left:863px;top:524.02px;width:1134px;height:1px;background:#dcdcdc"></div>
<div style="position:absolute;left:863px;top:525.02px;width:23px;height:28.33px;background:#f6f6f6"></div>
<div style="position:absolute;left:892.5px;top:532.68px;width:13px;height:13px;box-sizing:border-box;border:1px solid #c8c8c8;background:#fff"></div>
<div style="position:absolute;left:895.5px;top:538.68px;width:7px;height:1px;background:#666"></div>
<div style="position:absolute;left:898.5px;top:535.68px;width:1px;height:7px;background:#666"></div>
<div style="position:absolute;left:906px;top:538.68px;width:8px;height:0;border-top:1px dotted #c0c0c0"></div>
<span class="t " style="left:916.4px;top:531.99px;font-size:17px;font-weight:bold;color:#111;transform:scaleX(1.0887);">Pset_ReinforcementBarPitchOfWall</span>
<div style="position:absolute;left:863px;top:552.35px;width:1134px;height:1px;background:#dcdcdc"></div>
<div style="position:absolute;left:863px;top:553.35px;width:23px;height:28.33px;background:#f6f6f6"></div>
<div style="position:absolute;left:892.5px;top:561.01px;width:13px;height:13px;box-sizing:border-box;border:1px solid #c8c8c8;background:#fff"></div>
<div style="position:absolute;left:895.5px;top:567.01px;width:7px;height:1px;background:#666"></div>
<div style="position:absolute;left:906px;top:567.01px;width:8px;height:0;border-top:1px dotted #c0c0c0"></div>
<span class="t " style="left:916.4px;top:560.32px;font-size:17px;font-weight:bold;color:#111;transform:scaleX(1.0806);">Pset_WallCommon</span>
<div style="position:absolute;left:863px;top:580.68px;width:1134px;height:1px;background:#dcdcdc"></div>
<div style="position:absolute;left:863px;top:581.68px;width:23px;height:28.33px;background:#f6f6f6"></div>
<div style="position:absolute;left:1171px;top:581.68px;width:1px;height:28.33px;background:#e0e0e0"></div>
<div style="position:absolute;left:1934px;top:581.68px;width:1px;height:28.33px;background:#e0e0e0"></div>
<div style="position:absolute;left:899px;top:595.34px;width:30px;height:0;border-top:1px dotted #b8b8b8"></div>
<div style="position:absolute;left:899px;top:574.51px;width:0;height:35.50px;border-left:1px dotted #b8b8b8"></div>
<span class="t " style="left:930.8px;top:588.65px;font-size:17px;font-weight:normal;color:#222;transform:scaleX(0.9798);">AcousticRating</span>
<span class="t " style="left:1175.1px;top:588.65px;font-size:17px;font-weight:normal;color:#222;transform:scaleX(0.9936);">Unrated</span>
<div style="position:absolute;left:863px;top:609.01px;width:1134px;height:1px;background:#dcdcdc"></div>
<div style="position:absolute;left:863px;top:610.01px;width:23px;height:28.33px;background:#f6f6f6"></div>
<div style="position:absolute;left:1171px;top:610.01px;width:1px;height:28.33px;background:#e0e0e0"></div>
<div style="position:absolute;left:1934px;top:610.01px;width:1px;height:28.33px;background:#e0e0e0"></div>
<div style="position:absolute;left:899px;top:623.67px;width:30px;height:0;border-top:1px dotted #b8b8b8"></div>
<div style="position:absolute;left:899px;top:610.01px;width:0;height:28.33px;border-left:1px dotted #b8b8b8"></div>
<span class="t " style="left:930.8px;top:616.98px;font-size:17px;font-weight:normal;color:#222;transform:scaleX(0.9545);">Combustible</span>
<span class="t " style="left:1175.1px;top:616.98px;font-size:17px;font-weight:normal;color:#222;transform:scaleX(0.8972);">No</span>
<div style="position:absolute;left:863px;top:637.34px;width:1134px;height:1px;background:#dcdcdc"></div>
<div style="position:absolute;left:863px;top:638.34px;width:23px;height:28.33px;background:#f6f6f6"></div>
<div style="position:absolute;left:1171px;top:638.34px;width:1px;height:28.33px;background:#e0e0e0"></div>
<div style="position:absolute;left:1934px;top:638.34px;width:1px;height:28.33px;background:#e0e0e0"></div>
<div style="position:absolute;left:899px;top:652.00px;width:30px;height:0;border-top:1px dotted #b8b8b8"></div>
<div style="position:absolute;left:899px;top:638.34px;width:0;height:28.33px;border-left:1px dotted #b8b8b8"></div>
<span class="t " style="left:930.8px;top:645.31px;font-size:17px;font-weight:normal;color:#222;transform:scaleX(0.9968);">Compartmentation</span>
<span class="t " style="left:1175.1px;top:645.31px;font-size:17px;font-weight:normal;color:#222;transform:scaleX(0.8972);">No</span>
<div style="position:absolute;left:863px;top:665.67px;width:1134px;height:1px;background:#dcdcdc"></div>
<div style="position:absolute;left:863px;top:666.67px;width:23px;height:28.33px;background:#f6f6f6"></div>
<div style="position:absolute;left:1171px;top:666.67px;width:1px;height:28.33px;background:#e0e0e0"></div>
<div style="position:absolute;left:1934px;top:666.67px;width:1px;height:28.33px;background:#e0e0e0"></div>
<div style="position:absolute;left:899px;top:680.34px;width:30px;height:0;border-top:1px dotted #b8b8b8"></div>
<div style="position:absolute;left:899px;top:666.67px;width:0;height:28.33px;border-left:1px dotted #b8b8b8"></div>
<span class="t " style="left:930.8px;top:673.64px;font-size:17px;font-weight:normal;color:#222;transform:scaleX(1.0182);">ExtendToStructure</span>
<span class="t " style="left:1175.1px;top:673.64px;font-size:17px;font-weight:normal;color:#222;transform:scaleX(0.8972);">No</span>
<div style="position:absolute;left:863px;top:694.00px;width:1134px;height:1px;background:#dcdcdc"></div>
<div style="position:absolute;left:863px;top:695.00px;width:23px;height:28.33px;background:#f6f6f6"></div>
<div style="position:absolute;left:1171px;top:695.00px;width:1px;height:28.33px;background:#e0e0e0"></div>
<div style="position:absolute;left:1934px;top:695.00px;width:1px;height:28.33px;background:#e0e0e0"></div>
<div style="position:absolute;left:899px;top:708.67px;width:30px;height:0;border-top:1px dotted #b8b8b8"></div>
<div style="position:absolute;left:899px;top:695.00px;width:0;height:28.33px;border-left:1px dotted #b8b8b8"></div>
<span class="t " style="left:930.8px;top:701.97px;font-size:17px;font-weight:normal;color:#222;transform:scaleX(0.9768);">FireRating</span>
<span class="t " style="left:1175.1px;top:701.97px;font-size:17px;font-weight:normal;color:#222;transform:scaleX(0.9936);">Unrated</span>
<div style="position:absolute;left:863px;top:722.33px;width:1134px;height:1px;background:#dcdcdc"></div>
<div style="position:absolute;left:863px;top:723.33px;width:23px;height:28.33px;background:#f6f6f6"></div>
<div style="position:absolute;left:1171px;top:723.33px;width:1px;height:28.33px;background:#e0e0e0"></div>
<div style="position:absolute;left:1934px;top:723.33px;width:1px;height:28.33px;background:#e0e0e0"></div>
<div style="position:absolute;left:899px;top:737.00px;width:30px;height:0;border-top:1px dotted #b8b8b8"></div>
<div style="position:absolute;left:899px;top:723.33px;width:0;height:28.33px;border-left:1px dotted #b8b8b8"></div>
<span class="t " style="left:930.8px;top:730.30px;font-size:17px;font-weight:normal;color:#222;transform:scaleX(1.0133);">IsExternal</span>
<span class="t " style="left:1175.1px;top:730.30px;font-size:17px;font-weight:normal;color:#222;transform:scaleX(0.9230);">Yes</span>
<div style="position:absolute;left:863px;top:750.66px;width:1134px;height:1px;background:#dcdcdc"></div>
<div style="position:absolute;left:863px;top:751.66px;width:23px;height:28.33px;background:#f6f6f6"></div>
<div style="position:absolute;left:1171px;top:751.66px;width:1px;height:28.33px;background:#e0e0e0"></div>
<div style="position:absolute;left:1934px;top:751.66px;width:1px;height:28.33px;background:#e0e0e0"></div>
<div style="position:absolute;left:899px;top:765.33px;width:30px;height:0;border-top:1px dotted #b8b8b8"></div>
<div style="position:absolute;left:899px;top:751.66px;width:0;height:28.33px;border-left:1px dotted #b8b8b8"></div>
<span class="t " style="left:930.8px;top:758.63px;font-size:17px;font-weight:normal;color:#222;transform:scaleX(0.9562);">LoadBearing</span>
<span class="t " style="left:1175.1px;top:758.63px;font-size:17px;font-weight:normal;color:#222;transform:scaleX(0.9230);">Yes</span>
<div style="position:absolute;left:863px;top:778.99px;width:1134px;height:1px;background:#dcdcdc"></div>
<div style="position:absolute;left:863px;top:779.99px;width:23px;height:28.33px;background:#f6f6f6"></div>
<div style="position:absolute;left:1171px;top:779.99px;width:1px;height:28.33px;background:#e0e0e0"></div>
<div style="position:absolute;left:1934px;top:779.99px;width:1px;height:28.33px;background:#e0e0e0"></div>
<div style="position:absolute;left:899px;top:793.66px;width:30px;height:0;border-top:1px dotted #b8b8b8"></div>
<div style="position:absolute;left:899px;top:779.99px;width:0;height:28.33px;border-left:1px dotted #b8b8b8"></div>
<span class="t " style="left:930.8px;top:786.96px;font-size:17px;font-weight:normal;color:#222;transform:scaleX(0.9944);">Reference</span>
<span class="t " style="left:1175.1px;top:786.96px;font-size:17px;font-weight:normal;color:#222;transform:scaleX(1.0279);">n/a</span>
<div style="position:absolute;left:863px;top:807.32px;width:1134px;height:1px;background:#dcdcdc"></div>
<div style="position:absolute;left:863px;top:808.32px;width:23px;height:28.33px;background:#f6f6f6"></div>
<div style="position:absolute;left:1171px;top:808.32px;width:1px;height:28.33px;background:#e0e0e0"></div>
<div style="position:absolute;left:1934px;top:808.32px;width:1px;height:28.33px;background:#e0e0e0"></div>
<div style="position:absolute;left:899px;top:821.99px;width:30px;height:0;border-top:1px dotted #b8b8b8"></div>
<div style="position:absolute;left:899px;top:808.32px;width:0;height:28.33px;border-left:1px dotted #b8b8b8"></div>
<span class="t " style="left:930.8px;top:815.29px;font-size:17px;font-weight:normal;color:#222;transform:scaleX(0.9737);">SurfaceSpreadOfFlame</span>
<span class="t " style="left:1175.1px;top:815.29px;font-size:17px;font-weight:normal;color:#222;transform:scaleX(1.0279);">n/a</span>
<div style="position:absolute;left:863px;top:835.65px;width:1134px;height:1px;background:#dcdcdc"></div>
<div style="position:absolute;left:863px;top:836.65px;width:23px;height:28.33px;background:#f6f6f6"></div>
<div style="position:absolute;left:1171px;top:836.65px;width:1px;height:28.33px;background:#e0e0e0"></div>
<div style="position:absolute;left:1934px;top:836.65px;width:1px;height:28.33px;background:#e0e0e0"></div>
<div style="position:absolute;left:899px;top:850.32px;width:30px;height:0;border-top:1px dotted #b8b8b8"></div>
<div style="position:absolute;left:899px;top:836.65px;width:0;height:14.16px;border-left:1px dotted #b8b8b8"></div>
<span class="t " style="left:930.8px;top:843.62px;font-size:17px;font-weight:normal;color:#222;transform:scaleX(0.9798);">ThermalTransmittance</span>
<span class="t " style="left:1175.1px;top:843.62px;font-size:17px;font-weight:normal;color:#222;transform:scaleX(0.8871);">0</span>
<div style="position:absolute;left:863px;top:863.98px;width:1134px;height:1px;background:#dcdcdc"></div>
<div style="position:absolute;left:863px;top:864.98px;width:23px;height:28.33px;background:#f6f6f6"></div>
<div style="position:absolute;left:892.5px;top:872.65px;width:13px;height:13px;box-sizing:border-box;border:1px solid #c8c8c8;background:#fff"></div>
<div style="position:absolute;left:895.5px;top:878.65px;width:7px;height:1px;background:#666"></div>
<div style="position:absolute;left:898.5px;top:875.65px;width:1px;height:7px;background:#666"></div>
<div style="position:absolute;left:906px;top:878.65px;width:8px;height:0;border-top:1px dotted #c0c0c0"></div>
<span class="t " style="left:916.4px;top:871.95px;font-size:17px;font-weight:bold;color:#111;transform:scaleX(1.0806);">Pset_WallCommon</span>
<div style="position:absolute;left:863px;top:892.31px;width:1134px;height:1px;background:#dcdcdc"></div>
<div style="position:absolute;left:863px;top:893.31px;width:23px;height:28.33px;background:#f6f6f6"></div>
<div style="position:absolute;left:892.5px;top:900.98px;width:13px;height:13px;box-sizing:border-box;border:1px solid #c8c8c8;background:#fff"></div>
<div style="position:absolute;left:895.5px;top:906.98px;width:7px;height:1px;background:#666"></div>
<div style="position:absolute;left:906px;top:906.98px;width:8px;height:0;border-top:1px dotted #c0c0c0"></div>
<span class="t " style="left:916.4px;top:900.28px;font-size:17px;font-weight:bold;color:#111;transform:scaleX(1.0858);">Qto_WallBaseQuantities</span>
<div style="position:absolute;left:863px;top:920.64px;width:1134px;height:1px;background:#dcdcdc"></div>
<div style="position:absolute;left:863px;top:921.64px;width:23px;height:28.33px;background:#f6f6f6"></div>
<div style="position:absolute;left:1171px;top:921.64px;width:1px;height:28.33px;background:#e0e0e0"></div>
<div style="position:absolute;left:1934px;top:921.64px;width:1px;height:28.33px;background:#e0e0e0"></div>
<div style="position:absolute;left:899px;top:935.31px;width:30px;height:0;border-top:1px dotted #b8b8b8"></div>
<div style="position:absolute;left:899px;top:914.48px;width:0;height:35.50px;border-left:1px dotted #b8b8b8"></div>
<span class="t " style="left:930.8px;top:928.61px;font-size:17px;font-weight:normal;color:#222;transform:scaleX(0.9923);">GrossFootprintArea</span>
<span class="t " style="left:1175.1px;top:928.61px;font-size:17px;font-weight:normal;color:#222;transform:scaleX(1.0154);">0.345187</span>
<span class="t " style="left:1938.2px;top:928.61px;font-size:17px;font-weight:normal;color:#222;transform:scaleX(0.9354);">m2</span>
<div style="position:absolute;left:863px;top:948.97px;width:1134px;height:1px;background:#dcdcdc"></div>
<div style="position:absolute;left:863px;top:949.97px;width:23px;height:28.33px;background:#f6f6f6"></div>
<div style="position:absolute;left:1171px;top:949.97px;width:1px;height:28.33px;background:#e0e0e0"></div>
<div style="position:absolute;left:1934px;top:949.97px;width:1px;height:28.33px;background:#e0e0e0"></div>
<div style="position:absolute;left:899px;top:963.64px;width:30px;height:0;border-top:1px dotted #b8b8b8"></div>
<div style="position:absolute;left:899px;top:949.97px;width:0;height:28.33px;border-left:1px dotted #b8b8b8"></div>
<span class="t " style="left:930.8px;top:956.94px;font-size:17px;font-weight:normal;color:#222;transform:scaleX(0.9931);">Height</span>
<span class="t " style="left:1175.1px;top:956.94px;font-size:17px;font-weight:normal;color:#222;transform:scaleX(0.9660);">3 300</span>
<span class="t " style="left:1938.2px;top:956.94px;font-size:17px;font-weight:normal;color:#222;transform:scaleX(0.8507);">mm</span>
<div style="position:absolute;left:863px;top:977.30px;width:1134px;height:1px;background:#dcdcdc"></div>
<div style="position:absolute;left:863px;top:978.30px;width:23px;height:28.33px;background:#f6f6f6"></div>
<div style="position:absolute;left:1171px;top:978.30px;width:1px;height:28.33px;background:#e0e0e0"></div>
<div style="position:absolute;left:1934px;top:978.30px;width:1px;height:28.33px;background:#e0e0e0"></div>
<div style="position:absolute;left:899px;top:991.97px;width:30px;height:0;border-top:1px dotted #b8b8b8"></div>
<div style="position:absolute;left:899px;top:978.30px;width:0;height:28.33px;border-left:1px dotted #b8b8b8"></div>
<span class="t " style="left:930.8px;top:985.27px;font-size:17px;font-weight:normal;color:#222;transform:scaleX(0.9885);">Length</span>
<span class="t " style="left:1175.1px;top:985.27px;font-size:17px;font-weight:normal;color:#222;transform:scaleX(1.0082);">4 602.5</span>
<span class="t " style="left:1938.2px;top:985.27px;font-size:17px;font-weight:normal;color:#222;transform:scaleX(0.8507);">mm</span>
<div style="position:absolute;left:863px;top:1005.63px;width:1134px;height:1px;background:#dcdcdc"></div>
<div style="position:absolute;left:863px;top:1006.63px;width:23px;height:28.33px;background:#f6f6f6"></div>
<div style="position:absolute;left:1171px;top:1006.63px;width:1px;height:28.33px;background:#e0e0e0"></div>
<div style="position:absolute;left:1934px;top:1006.63px;width:1px;height:28.33px;background:#e0e0e0"></div>
<div style="position:absolute;left:899px;top:1020.30px;width:30px;height:0;border-top:1px dotted #b8b8b8"></div>
<div style="position:absolute;left:899px;top:1006.63px;width:0;height:28.33px;border-left:1px dotted #b8b8b8"></div>
<span class="t " style="left:930.8px;top:1013.60px;font-size:17px;font-weight:normal;color:#222;transform:scaleX(0.9731);">NetSideArea</span>
<span class="t " style="left:1175.1px;top:1013.60px;font-size:17px;font-weight:normal;color:#222;transform:scaleX(0.9836);">15 188 250</span>
<span class="t " style="left:1938.2px;top:1013.60px;font-size:17px;font-weight:normal;color:#222;transform:scaleX(0.9354);">m2</span>
<div style="position:absolute;left:863px;top:1033.96px;width:1134px;height:1px;background:#dcdcdc"></div>
<div style="position:absolute;left:863px;top:1034.96px;width:23px;height:28.33px;background:#f6f6f6"></div>
<div style="position:absolute;left:1171px;top:1034.96px;width:1px;height:28.33px;background:#e0e0e0"></div>
<div style="position:absolute;left:1934px;top:1034.96px;width:1px;height:28.33px;background:#e0e0e0"></div>
<div style="position:absolute;left:899px;top:1048.63px;width:30px;height:0;border-top:1px dotted #b8b8b8"></div>
<div style="position:absolute;left:899px;top:1034.96px;width:0;height:28.33px;border-left:1px dotted #b8b8b8"></div>
<span class="t " style="left:930.8px;top:1041.93px;font-size:17px;font-weight:normal;color:#222;transform:scaleX(0.9731);">NetSideArea</span>
<span class="t " style="left:1175.1px;top:1041.93px;font-size:17px;font-weight:normal;color:#222;transform:scaleX(1.0098);">9.661225</span>
<span class="t " style="left:1938.2px;top:1041.93px;font-size:17px;font-weight:normal;color:#222;transform:scaleX(0.9354);">m2</span>
<div style="position:absolute;left:863px;top:1062.29px;width:1134px;height:1px;background:#dcdcdc"></div>
<div style="position:absolute;left:863px;top:1063.29px;width:23px;height:28.33px;background:#f6f6f6"></div>
<div style="position:absolute;left:1171px;top:1063.29px;width:1px;height:28.33px;background:#e0e0e0"></div>
<div style="position:absolute;left:1934px;top:1063.29px;width:1px;height:28.33px;background:#e0e0e0"></div>
<div style="position:absolute;left:899px;top:1076.96px;width:30px;height:0;border-top:1px dotted #b8b8b8"></div>
<div style="position:absolute;left:899px;top:1063.29px;width:0;height:28.33px;border-left:1px dotted #b8b8b8"></div>
<span class="t " style="left:930.8px;top:1070.26px;font-size:17px;font-weight:normal;color:#222;transform:scaleX(0.9559);">NetVolume</span>
<span class="t " style="left:1175.1px;top:1070.26px;font-size:17px;font-weight:normal;color:#222;transform:scaleX(1.0091);">1 139 118 749.99999</span>
<span class="t " style="left:1938.2px;top:1070.26px;font-size:17px;font-weight:normal;color:#222;transform:scaleX(0.9354);">m3</span>
<div style="position:absolute;left:863px;top:1090.62px;width:1134px;height:1px;background:#dcdcdc"></div>
<div style="position:absolute;left:863px;top:1091.62px;width:23px;height:28.33px;background:#f6f6f6"></div>
<div style="position:absolute;left:1171px;top:1091.62px;width:1px;height:28.33px;background:#e0e0e0"></div>
<div style="position:absolute;left:1934px;top:1091.62px;width:1px;height:28.33px;background:#e0e0e0"></div>
<div style="position:absolute;left:899px;top:1105.29px;width:30px;height:0;border-top:1px dotted #b8b8b8"></div>
<div style="position:absolute;left:899px;top:1091.62px;width:0;height:28.33px;border-left:1px dotted #b8b8b8"></div>
<span class="t " style="left:930.8px;top:1098.59px;font-size:17px;font-weight:normal;color:#222;transform:scaleX(0.9559);">NetVolume</span>
<span class="t " style="left:1175.1px;top:1098.59px;font-size:17px;font-weight:normal;color:#222;transform:scaleX(1.0098);">0.724592</span>
<span class="t " style="left:1938.2px;top:1098.59px;font-size:17px;font-weight:normal;color:#222;transform:scaleX(0.9354);">m3</span>
<div style="position:absolute;left:863px;top:1118.95px;width:1134px;height:1px;background:#dcdcdc"></div>
<div style="position:absolute;left:863px;top:1119.95px;width:23px;height:28.33px;background:#f6f6f6"></div>
<div style="position:absolute;left:1171px;top:1119.95px;width:1px;height:28.33px;background:#e0e0e0"></div>
<div style="position:absolute;left:1934px;top:1119.95px;width:1px;height:28.33px;background:#e0e0e0"></div>
<div style="position:absolute;left:899px;top:1133.62px;width:30px;height:0;border-top:1px dotted #b8b8b8"></div>
<div style="position:absolute;left:899px;top:1119.95px;width:0;height:14.16px;border-left:1px dotted #b8b8b8"></div>
<span class="t " style="left:930.8px;top:1126.92px;font-size:17px;font-weight:normal;color:#222;transform:scaleX(1.0030);">Width</span>
<span class="t " style="left:1175.1px;top:1126.92px;font-size:17px;font-weight:normal;color:#222;transform:scaleX(0.9671);">75</span>
<span class="t " style="left:1938.2px;top:1126.92px;font-size:17px;font-weight:normal;color:#222;transform:scaleX(0.8507);">mm</span>
<div style="position:absolute;left:863px;top:1147.28px;width:1134px;height:1px;background:#dcdcdc"></div>
<div style="position:absolute;left:886px;top:79px;width:1px;height:1069.28px;background:#d4d4d4"></div>
</body></html>
